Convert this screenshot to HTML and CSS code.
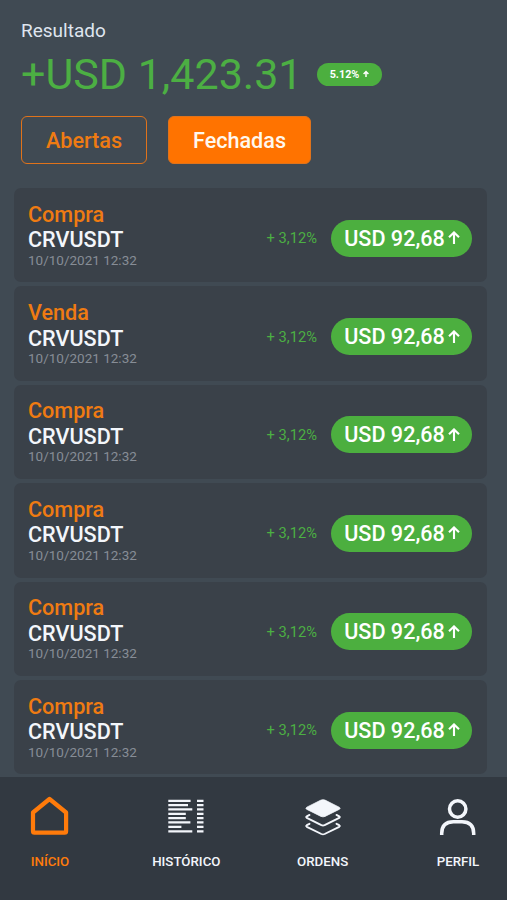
FILE: index.html
```html
<!DOCTYPE html>
<html lang="pt-BR">

<head>
    <meta charset="UTF-8">
    <meta name="viewport" content="width=device-width, initial-scale=1.0">
    <title>Resultado</title>
    <link rel="stylesheet" href="styles.css">
</head>

<body>
    <svg width="0" height="0" class="symbols">
        <symbol id="arrow-up" viewBox="0 0 12 14">
            <path d="M6 13V2M1 6.2L6 1.4L11 6.2" fill="none" stroke="currentColor" stroke-width="2.1" />
        </symbol>
    </svg>
    <header>
        <p class="title">Resultado</p>
        <div class="result">
            <h1>+USD 1,423.31</h1>
            <span class="percent">5.12%<svg viewBox="0 0 12 14"><path d="M6 13V2M1.2 7L6 2.2L10.8 7" fill="none" stroke="currentColor" stroke-width="3" /></svg></span>
        </div>
        <div class="tabs">
            <button class="tab tab-open">Abertas</button>
            <button class="tab tab-closed">Fechadas</button>
        </div>
    </header>
    <main>
        <div class="order">
            <div class="info">
                <h2>Compra</h2>
                <h3>CRVUSDT</h3>
                <p>10/10/2021 12:32</p>
            </div>
            <span class="change">+ 3,12%</span>
            <span class="value">USD 92,68<svg><use href="#arrow-up" /></svg></span>
        </div>
        <div class="order">
            <div class="info">
                <h2>Venda</h2>
                <h3>CRVUSDT</h3>
                <p>10/10/2021 12:32</p>
            </div>
            <span class="change">+ 3,12%</span>
            <span class="value">USD 92,68<svg><use href="#arrow-up" /></svg></span>
        </div>
        <div class="order">
            <div class="info">
                <h2>Compra</h2>
                <h3>CRVUSDT</h3>
                <p>10/10/2021 12:32</p>
            </div>
            <span class="change">+ 3,12%</span>
            <span class="value">USD 92,68<svg><use href="#arrow-up" /></svg></span>
        </div>
        <div class="order">
            <div class="info">
                <h2>Compra</h2>
                <h3>CRVUSDT</h3>
                <p>10/10/2021 12:32</p>
            </div>
            <span class="change">+ 3,12%</span>
            <span class="value">USD 92,68<svg><use href="#arrow-up" /></svg></span>
        </div>
        <div class="order">
            <div class="info">
                <h2>Compra</h2>
                <h3>CRVUSDT</h3>
                <p>10/10/2021 12:32</p>
            </div>
            <span class="change">+ 3,12%</span>
            <span class="value">USD 92,68<svg><use href="#arrow-up" /></svg></span>
        </div>
        <div class="order">
            <div class="info">
                <h2>Compra</h2>
                <h3>CRVUSDT</h3>
                <p>10/10/2021 12:32</p>
            </div>
            <span class="change">+ 3,12%</span>
            <span class="value">USD 92,68<svg><use href="#arrow-up" /></svg></span>
        </div>
    </main>
    <nav>
        <a class="nav-item active">
            <svg viewBox="0 0 40 40" fill="none" stroke="currentColor" stroke-width="4.2" stroke-linejoin="round">
                <path d="M3 16.5L19.5 3L36.1 16.5V35.2Q36.1 36.6 34.7 36.6H4.4Q3 36.6 3 35.2Z" />
            </svg>
            <span>INÍCIO</span>
        </a>
        <a class="nav-item">
            <svg viewBox="0 0 40 40" fill="none" stroke="currentColor" stroke-width="2.3">
                <path d="M2.3 4.8H24.6M2.3 9.1H22M2.3 13.4H26.3M2.3 17.8H19.8M2.3 22.1H19.8M2.3 26.4H24.4M2.3 30.8H15.4M2.3 35.3H26.3" />
                <path d="M31 4.8H37.5M31 9.1H37.5M31 13.4H37.5M31 17.8H37.5M31 22.1H37.5M31 26.4H37.5M31 30.8H37.5M31 35.3H37.5" />
            </svg>
            <span>HISTÓRICO</span>
        </a>
        <a class="nav-item">
            <svg viewBox="0 0 40 40" fill="none" stroke="currentColor" stroke-width="1.9" stroke-linejoin="round" stroke-linecap="round">
                <path d="M18 4.1Q20 3.2 22 4.1L36.5 11.4Q37.8 12.3 36.5 13.2L22 20.4Q20 21.3 18 20.4L3.5 13.2Q2.2 12.3 3.5 11.4Z" fill="currentColor" stroke-width="0.8" />
                <path d="M6.5 18.9L3.8 20.3Q2.6 21.1 3.8 21.9L18.4 29.1Q20 29.8 21.6 29.1L36.2 21.9Q37.4 21.1 36.2 20.3L33.5 18.9" />
                <path d="M6.5 27.8L3.8 29.2Q2.6 30 3.8 30.8L18.4 38Q20 38.7 21.6 38L36.2 30.8Q37.4 30 36.2 29.2L33.5 27.8" />
            </svg>
            <span>ORDENS</span>
        </a>
        <a class="nav-item">
            <svg viewBox="0 0 40 40" fill="none" stroke="currentColor" stroke-width="3.5">
                <circle cx="19.7" cy="13" r="8.2" />
                <path d="M3.7 39V37.5Q3.7 25.7 15.4 25.7H24Q35.7 25.7 35.7 37.5V39" />
            </svg>
            <span>PERFIL</span>
        </a>
    </nav>
</body>

</html>
```
FILE: styles.css
```css
* {
    margin: 0;
    padding: 0;
    box-sizing: border-box;
}

body {
    display: flex;
    flex-direction: column;
    height: 900px;
    overflow: hidden;
    background-color: #404a53;
    font-family: Roboto, sans-serif;
    color: #f3f6fb;
}

.symbols {
    display: none;
}

header {
    padding: 19px 21px 0;
}

.title {
    font-size: 19px;
    line-height: 24px;
    color: #dfe5ef;
}

.result {
    display: flex;
    align-items: center;
    height: 62px;
}

h1 {
    width: 296px;
    font-size: 43px;
    font-weight: 400;
    line-height: 62px;
    color: #4caf43;
}

.percent {
    display: flex;
    align-items: center;
    justify-content: center;
    gap: 4px;
    width: 65px;
    height: 23px;
    border-radius: 12px;
    background-color: #4caf3f;
    font-size: 10.8px;
    font-weight: 700;
    color: #ffffff;
}

.percent svg {
    width: 6px;
    height: 8px;
}

.tabs {
    display: flex;
    gap: 21px;
    margin-top: 11px;
}

.tab {
    height: 48px;
    border: 1.5px solid #e0731b;
    border-radius: 6px;
    font-family: inherit;
    font-size: 21.6px;
    font-weight: 500;
}

.tab-open {
    width: 126px;
    background-color: transparent;
    color: #ef7b12;
}

.tab-closed {
    width: 143px;
    background-color: #ff7300;
    color: #fff8ee;
}

main {
    display: flex;
    flex-direction: column;
    gap: 4px;
    height: 613px;
    padding: 24px 20px 0 14px;
    overflow: hidden;
}

.order {
    display: flex;
    flex-shrink: 0;
    align-items: center;
    height: 94.4px;
    padding: 0 15px 0 14px;
    border-radius: 7px;
    background-color: #3a4149;
}

.info {
    flex: 1;
    padding-bottom: 1px;
}

.info h2,
.info h3 {
    font-size: 21.6px;
    font-weight: 500;
    line-height: 25.5px;
}

.info h2 {
    color: #ef7b12;
}

.info p {
    font-size: 13.5px;
    line-height: 15px;
    color: #878d96;
}

.change {
    margin-right: 14px;
    padding-top: 6px;
    font-size: 14.7px;
    color: #4caf43;
}

.value {
    display: flex;
    align-items: center;
    justify-content: center;
    gap: 3px;
    width: 141px;
    height: 37px;
    margin-top: 6px;
    padding-left: 1px;
    border-radius: 19px;
    background-color: #4caf3f;
    font-size: 21.6px;
    font-weight: 500;
    color: #ffffff;
}

.value svg {
    width: 12px;
    height: 14px;
}

nav {
    display: flex;
    flex: 1;
    justify-content: space-between;
    padding: 19px 10px 0;
    background-color: #323941;
}

.nav-item {
    display: flex;
    flex-direction: column;
    align-items: center;
    gap: 18px;
    width: 80px;
    font-size: 13.3px;
    font-weight: 500;
}

.nav-item:last-child {
    width: 78px;
}

.nav-item svg {
    width: 40px;
    height: 40px;
}

.active {
    color: #ff7b0b;
}
```
